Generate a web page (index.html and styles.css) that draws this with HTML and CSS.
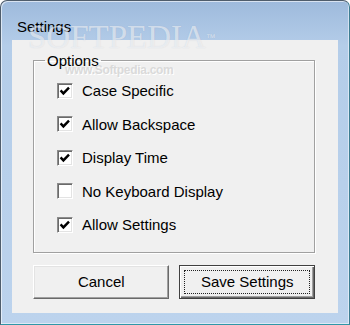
FILE: index.html
```html
<!DOCTYPE html>
<html lang="en">
<head>
    <meta charset="utf-8">
    <title>Settings</title>
    <link rel="stylesheet" href="styles.css">
</head>
<body>
    <div class="window">
        <div class="titlebar">Settings</div>
        <div class="client">
            <fieldset class="group">
                <legend>Options</legend>
                <label class="row"><span class="check on"><svg viewBox="0 0 14 14" width="14" height="14"><path d="M2.6 6.4 L5.4 9.4 L11 3.6" /></svg></span>Case Specific</label>
                <label class="row"><span class="check on"><svg viewBox="0 0 14 14" width="14" height="14"><path d="M2.6 6.4 L5.4 9.4 L11 3.6" /></svg></span>Allow Backspace</label>
                <label class="row"><span class="check on"><svg viewBox="0 0 14 14" width="14" height="14"><path d="M2.6 6.4 L5.4 9.4 L11 3.6" /></svg></span>Display Time</label>
                <label class="row"><span class="check"></span>No Keyboard Display</label>
                <label class="row"><span class="check on"><svg viewBox="0 0 14 14" width="14" height="14"><path d="M2.6 6.4 L5.4 9.4 L11 3.6" /></svg></span>Allow Settings</label>
            </fieldset>
            <div class="buttons">
                <button class="btn cancel-btn">Cancel</button>
                <button class="btn save-btn"><span class="focus">Save Settings</span></button>
            </div>
        </div>
        <!-- watermark over the window -->
        <div class="watermark">SOFTPEDIA<span class="tm">™</span></div>
        <div class="watermark-url">www.Softpedia.com</div>
    </div>
</body>
</html>
```

FILE: styles.css
```css
body {
    margin: 0;
    background-color: #ffffff;
    font-family: "Liberation Sans", Arial, sans-serif;
    font-size: 15px;
    color: #000;
}
.window {
    position: relative;
    width: 350px;
    height: 325px;
    box-sizing: border-box;
    padding: 0 11px;
    border: 1px solid #4f5d6c;
    border-right-color: #3e7e93;
    border-bottom-color: #2f97a8;
    border-radius: 7px 7px 0 0;
    background: linear-gradient(#9ebadc, #b4cde9 45px, #bcd3ed);
    box-shadow: inset 1px 1px rgba(255, 255, 255, 0.6), inset -1px -1px rgba(255, 255, 255, 0.5);
    overflow: hidden;
}
.titlebar {
    height: 39px;
    box-sizing: border-box;
    padding: 17px 0 0 5px;
    line-height: 17px;
}
.client {
    height: 273px;
    box-sizing: border-box;
    padding: 12px 23px 0 21px;
    background: #f0f0f0;
}
.group {
    margin: 0;
    padding: 5px 0 10px 0;
    border: 1px solid #a0a0a0;
    box-shadow: inset 1px 1px #fff, 1px 1px #fff;
    min-width: 0;
}
.group legend {
    margin-left: 11px;
    padding: 0 2px;
    line-height: 17px;
}
.row {
    display: flex;
    align-items: center;
    gap: 9px;
    height: 33.5px;
    padding-left: 23px;
}
.check {
    width: 16px;
    height: 16px;
    box-sizing: border-box;
    display: flex;
    align-items: center;
    justify-content: center;
    background: #fff;
    border: 1px solid;
    border-color: #8c8c8c #fff #fff #8c8c8c;
    box-shadow: inset 1px 1px #6a6a6a, inset -1px -1px #e3e3e3;
}
.check svg path {
    fill: none;
    stroke: #000;
    stroke-width: 2.4;
}
.buttons {
    display: flex;
    gap: 10px;
    margin-top: 12px;
}
.btn {
    height: 34px;
    box-sizing: border-box;
    padding: 0;
    font-family: inherit;
    font-size: 15px;
    color: #000;
    background: #f0f0f0;
    border: 1px solid;
    display: flex;
    align-items: center;
    justify-content: center;
}
.cancel-btn {
    width: 137px;
    border-color: #fff #696969 #696969 #fff;
    box-shadow: inset -1px -1px #a0a0a0, inset 1px 1px #e3e3e3;
}
.save-btn {
    width: 136px;
    padding: 4px;
    border-color: #404040;
    box-shadow: inset 1px 1px #fff, inset -1px -1px #696969, inset -2px -2px #a0a0a0;
}
.focus {
    flex: 1;
    align-self: stretch;
    display: flex;
    align-items: center;
    justify-content: center;
    border: 1px dotted #222;
}
.watermark {
    position: absolute;
    left: 27px;
    top: 20px;
    font-family: "Liberation Serif", "Times New Roman", serif;
    font-size: 33px;
    line-height: 33px;
    color: rgba(255, 255, 255, 0.55);
    text-shadow: 0 0 1px rgba(110, 130, 160, 0.25);
    pointer-events: none;
}
.watermark .tm {
    font-family: "Liberation Sans", Arial, sans-serif;
    font-size: 10px;
    vertical-align: top;
    position: relative;
    top: 0;
}
.watermark-url {
    position: absolute;
    left: 64px;
    top: 62px;
    font-size: 12px;
    font-weight: bold;
    letter-spacing: -0.3px;
    color: #dadada;
    text-shadow: 1px 1px #fff;
    pointer-events: none;
}
```
